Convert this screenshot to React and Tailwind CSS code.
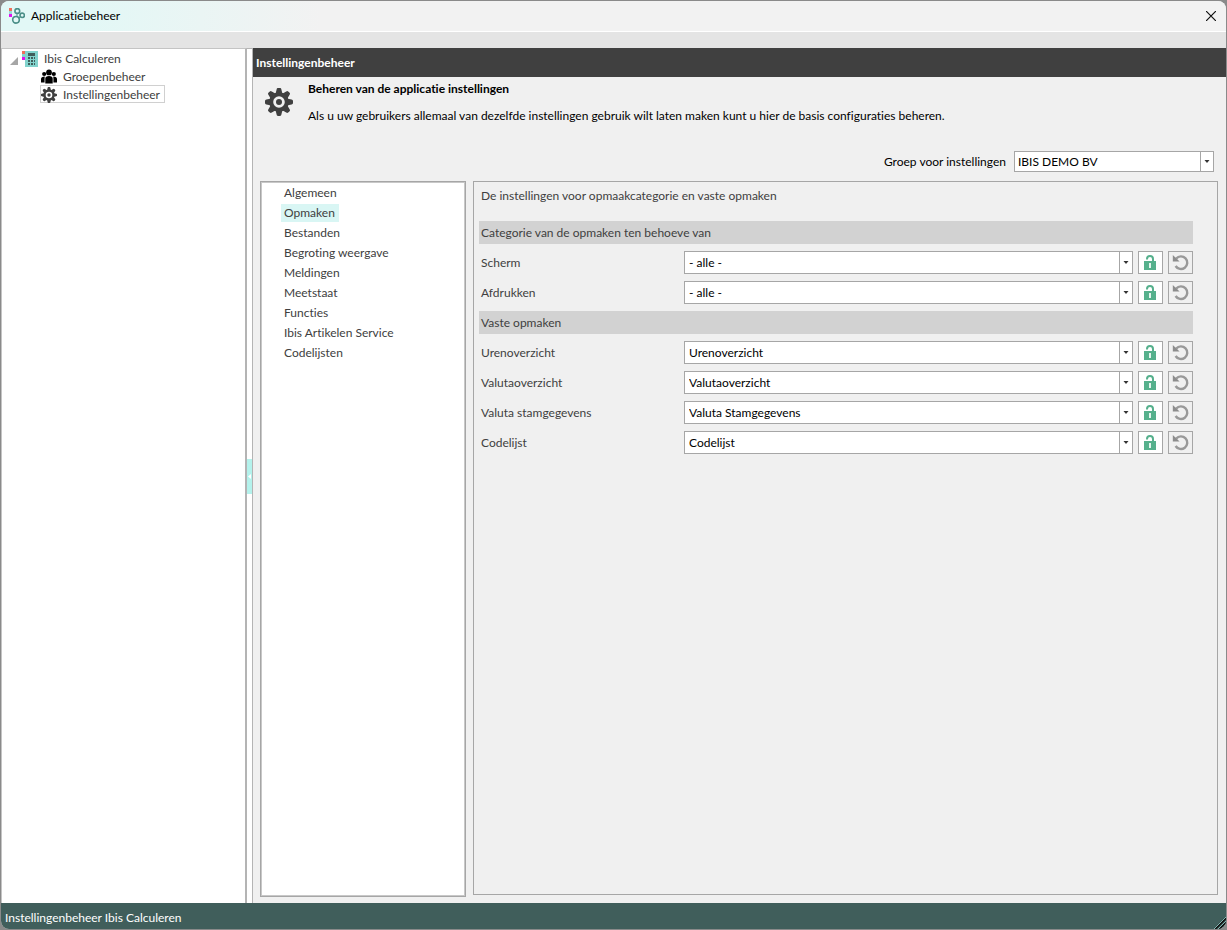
import React, { useState } from 'react'

const CATEGORIES = [
  'Algemeen',
  'Opmaken',
  'Bestanden',
  'Begroting weergave',
  'Meldingen',
  'Meetstaat',
  'Functies',
  'Ibis Artikelen Service',
  'Codelijsten',
]

const SECTIONS = [
  {
    title: 'Categorie van de opmaken ten behoeve van',
    rows: [
      { id: 'scherm', label: 'Scherm', value: '- alle -' },
      { id: 'afdrukken', label: 'Afdrukken', value: '- alle -' },
    ],
  },
  {
    title: 'Vaste opmaken',
    rows: [
      { id: 'urenoverzicht', label: 'Urenoverzicht', value: 'Urenoverzicht' },
      { id: 'valutaoverzicht', label: 'Valutaoverzicht', value: 'Valutaoverzicht' },
      { id: 'valuta-stamgegevens', label: 'Valuta stamgegevens', value: 'Valuta Stamgegevens' },
      { id: 'codelijst', label: 'Codelijst', value: 'Codelijst' },
    ],
  },
]

function AppIcon() {
  return (
    <svg width="16" height="16" viewBox="0 0 16 16" fill="none">
      <rect x="0" y="0" width="3" height="3" fill="#f0705a" />
      <rect x="0" y="3" width="3" height="3" fill="#9adbd6" />
      <rect x="0" y="6" width="3" height="3" fill="#e010f0" />
      <g stroke="#4b8f88" strokeWidth="1.6">
        <circle cx="8.3" cy="3" r="2.4" />
        <circle cx="13.2" cy="7.3" r="2.2" />
        <circle cx="7" cy="11.8" r="3.3" />
      </g>
      <path d="M8 5v3.5M10.5 4.5l1 1M9.5 10l1.8-1.2" stroke="#4b8f88" />
    </svg>
  )
}

function CalculatorIcon() {
  return (
    <svg width="16" height="16" viewBox="0 0 16 16" shapeRendering="crispEdges">
      <rect x="3" y="0" width="13" height="16" fill="#82d3cd" />
      <rect x="0" y="0" width="3" height="3" fill="#f0705a" />
      <rect x="0" y="3" width="3" height="3" fill="#82d3cd" />
      <rect x="0" y="6" width="3" height="3" fill="#e010f0" />
      <rect x="6" y="2" width="7" height="3" fill="#3f5e5b" />
      {[6, 9, 12].map((y) =>
        [6, 9, 12].map((x) => (
          <rect key={`${x}-${y}`} x={x} y={y} width={x === 12 ? 1 : 2} height="2" fill="#3f5e5b" />
        ))
      )}
    </svg>
  )
}

function GroupIcon() {
  return (
    <svg width="16" height="16" viewBox="0 0 16 16" fill="#000">
      <circle cx="8" cy="3.4" r="2.9" />
      <circle cx="3.2" cy="5" r="2.1" />
      <circle cx="12.8" cy="5" r="2.1" />
      <path d="M4.3 14.5V9.6Q4.3 7 8 7t3.7 2.6v4.9zM0 13.5V10Q0 7.4 3.8 7.4 3.5 8.5 3.6 13.5zM16 13.5V10q0-2.6-3.8-2.6.3 1.1.2 6.1z" />
    </svg>
  )
}

function GearIcon({ size }) {
  return (
    <svg width={size} height={size} viewBox="0 0 28 28" fill="#404040">
      {[0, 45, 90, 135].map((angle) => (
        <path
          key={angle}
          d="M11.6 1.4Q11.7 0 13 0h2q1.3 0 1.4 1.4l1.2 5h-7.2zM11.6 26.6q.1 1.4 1.4 1.4h2q1.3 0 1.4-1.4l1.2-5h-7.2z"
          transform={`rotate(${angle} 14 14)`}
        />
      ))}
      <path
        fillRule="evenodd"
        d="M14 4.2a9.8 9.8 0 1 0 0 19.6 9.8 9.8 0 0 0 0-19.6zm0 4a5.8 5.8 0 1 1 0 11.6 5.8 5.8 0 0 1 0-11.6z"
      />
      <circle cx="14" cy="14" r="3" />
    </svg>
  )
}

function LockIcon() {
  return (
    <svg width="13" height="15" viewBox="0 0 13 15">
      <path d="M3 4.5V4q0-3 3-3t3 3v3" fill="none" stroke="#55b08c" strokeWidth="2" />
      <path d="M0 6h12v9H0z" fill="#55b08c" />
      <path d="M5 8h2v5H5z" fill="#e4f5ee" />
    </svg>
  )
}

function ResetIcon() {
  return (
    <svg width="17" height="17" viewBox="0 0 17 17" fill="none">
      <path d="M4.2 4.6A6.3 6.3 0 1 1 3.6 12" stroke="#999" strokeWidth="2.4" />
      <path d="M.8 1v6.6h6.8z" fill="#8c8c8c" />
    </svg>
  )
}

function Dropdown({ id, options, compact }) {
  return (
    <div className="relative flex-1">
      <select
        id={id}
        className={`block w-full appearance-none border border-[#a6a6a6] bg-white pr-4 text-xs text-black outline-none ${
          compact ? 'h-[21px] pl-[3px]' : 'h-[23px] pl-1'
        }`}
      >
        {options.map((option) => (
          <option key={option}>{option}</option>
        ))}
      </select>
      <span className="pointer-events-none absolute inset-y-0 right-0 flex w-3.5 items-center justify-center border border-[#a6a6a6]">
        <svg width="6" height="3" viewBox="0 0 6 3" fill="#333">
          <path d="M.5 0h5L3 3z" />
        </svg>
      </span>
    </div>
  )
}

function SettingRow({ row }) {
  return (
    <div className="flex h-[23px] items-center">
      <label htmlFor={row.id} className="w-[205px] shrink-0 pl-0.5">
        {row.label}
      </label>
      <Dropdown id={row.id} options={[row.value]} />
      <button
        type="button"
        aria-label={`${row.label} vergrendelen`}
        className="ml-[5px] flex h-[23px] w-[25px] items-center justify-center border border-[#a6a6a6] bg-white"
      >
        <LockIcon />
      </button>
      <button
        type="button"
        aria-label={`${row.label} herstellen`}
        className="ml-[5px] flex h-[23px] w-[25px] items-center justify-center border border-[#a6a6a6] bg-[#f0f0f0]"
      >
        <ResetIcon />
      </button>
    </div>
  )
}

function TreeView() {
  return (
    <nav className="w-[246px] shrink-0 border-x border-t border-[#c4c4c4] border-r-2 border-r-[#b4b4b4] bg-white text-[#404040]">
      <div className="flex h-[19px] items-center pl-2">
        <svg width="8" height="8" viewBox="0 0 8 8" fill="#a6a6a6" className="mt-1">
          <path d="M8 0v8H0z" />
        </svg>
        <span className="ml-1 flex items-center gap-1.5">
          <CalculatorIcon />
          Ibis Calculeren
        </span>
      </div>
      <a href="#groepen" className="ml-[38px] flex h-[17px] items-center gap-1.5 pl-px">
        <GroupIcon />
        Groepenbeheer
      </a>
      <a
        href="#instellingen"
        className="ml-[38px] flex h-[18px] w-fit items-center gap-1.5 border border-[#d0d0d0] pr-1 pt-px"
      >
        <GearIcon size={16} />
        Instellingenbeheer
      </a>
    </nav>
  )
}

export default function App() {
  const [selected, setSelected] = useState('Opmaken')

  return (
    <div className="h-screen bg-[#8a8a8a] p-px font-['Lato','Open_Sans',sans-serif] text-xs [font-variant-ligatures:none]">
      <div className="flex h-full flex-col overflow-hidden rounded-lg bg-[#f0f0f0]">
        <header className="flex h-[31px] shrink-0 items-center border-b border-white bg-[linear-gradient(90deg,#e2f8f6_0px,#e2f8f6_80px,#f2f2f2_320px)] pl-2 pr-2.5">
          <AppIcon />
          <h1 className="ml-1.5 flex-1 text-black">Applicatiebeheer</h1>
          <button type="button" aria-label="Sluiten">
            <svg width="10" height="10" viewBox="0 0 10 10" stroke="#111" strokeWidth="1.2">
              <path d="M0 0l10 10M10 0L0 10" />
            </svg>
          </button>
        </header>
        <div className="h-4 shrink-0 bg-[#e4e4e4]" />

        <div className="flex min-h-0 flex-1">
          <TreeView />

          {/* Splitter */}
          <div className="flex w-1.5 shrink-0 items-center border-r border-t border-[#b4b4b4] bg-white">
            <button
              type="button"
              aria-label="Boomstructuur inklappen"
              className="flex h-[35px] w-full items-center justify-center bg-[#b4f2ec]"
            >
              <svg width="3" height="5" viewBox="0 0 3 5" fill="#fff">
                <path d="M3 0v5L0 2.5z" />
              </svg>
            </button>
          </div>

          <main className="flex min-w-0 flex-1 flex-col">
            <h2 className="flex h-[29px] shrink-0 items-center bg-[#404040] pl-[3px] font-bold text-white">
              Instellingenbeheer
            </h2>

            <div className="flex shrink-0 pl-3 text-black">
              <div className="pt-[11px]">
                <GearIcon size={28} />
              </div>
              <div className="ml-[15px] pt-1">
                <h3 className="font-bold">Beheren van de applicatie instellingen</h3>
                <p className="mt-[11px]">
                  Als u uw gebruikers allemaal van dezelfde instellingen gebruik wilt laten maken kunt u hier de basis
                  configuraties beheren.
                </p>
              </div>
            </div>

            <div className="mt-[27px] flex shrink-0 items-center justify-end pr-3 text-black">
              <label htmlFor="groep" className="mr-2">
                Groep voor instellingen
              </label>
              <div className="flex w-[200px]">
                <Dropdown id="groep" options={['IBIS DEMO BV']} compact />
              </div>
            </div>

            <div className="mt-[9px] flex min-h-0 flex-1 gap-[7px] pb-1.5 pl-[7px] pr-2 text-[#404040]">
              <ul className="w-[206px] shrink-0 border border-[#a6a6a6] bg-white pl-5 pt-0.5 inset-ring inset-ring-[#c8c8c8]">
                {CATEGORIES.map((category) => (
                  <li key={category} className="h-5">
                    <button
                      type="button"
                      onClick={() => setSelected(category)}
                      className={`h-[18px] pl-[3px] pr-1 ${category === selected ? 'bg-[#d9f6f4]' : ''}`}
                    >
                      {category}
                    </button>
                  </li>
                ))}
              </ul>

              <section className="mb-0.5 min-w-0 flex-1 border border-[#a6a6a6] pl-[5px] pr-6 pt-1.5">
                <p className="mb-[17px] pl-0.5">De instellingen voor opmaakcategorie en vaste opmaken</p>
                <div className="flex flex-col gap-[7px]">
                  {SECTIONS.map((section) => (
                    <React.Fragment key={section.title}>
                      <h4 className="flex h-[23px] items-center bg-[#d2d2d2] pl-0.5">{section.title}</h4>
                      {section.rows.map((row) => (
                        <SettingRow key={row.id} row={row} />
                      ))}
                    </React.Fragment>
                  ))}
                </div>
              </section>
            </div>
          </main>
        </div>

        <footer className="relative flex h-[26px] shrink-0 items-center bg-[#405e5b] pl-1 pt-1 text-white">
          Instellingenbeheer Ibis Calculeren
          <svg width="12" height="12" viewBox="0 0 12 12" className="absolute bottom-0 right-0" fill="none">
            <path d="M1 12L12 1M5 12l7-7" stroke="#111" strokeWidth="2" />
            <path d="M0 12L12 0M4 12l8-8" stroke="#9adbd6" strokeWidth="0.8" />
          </svg>
        </footer>
      </div>
    </div>
  )
}
